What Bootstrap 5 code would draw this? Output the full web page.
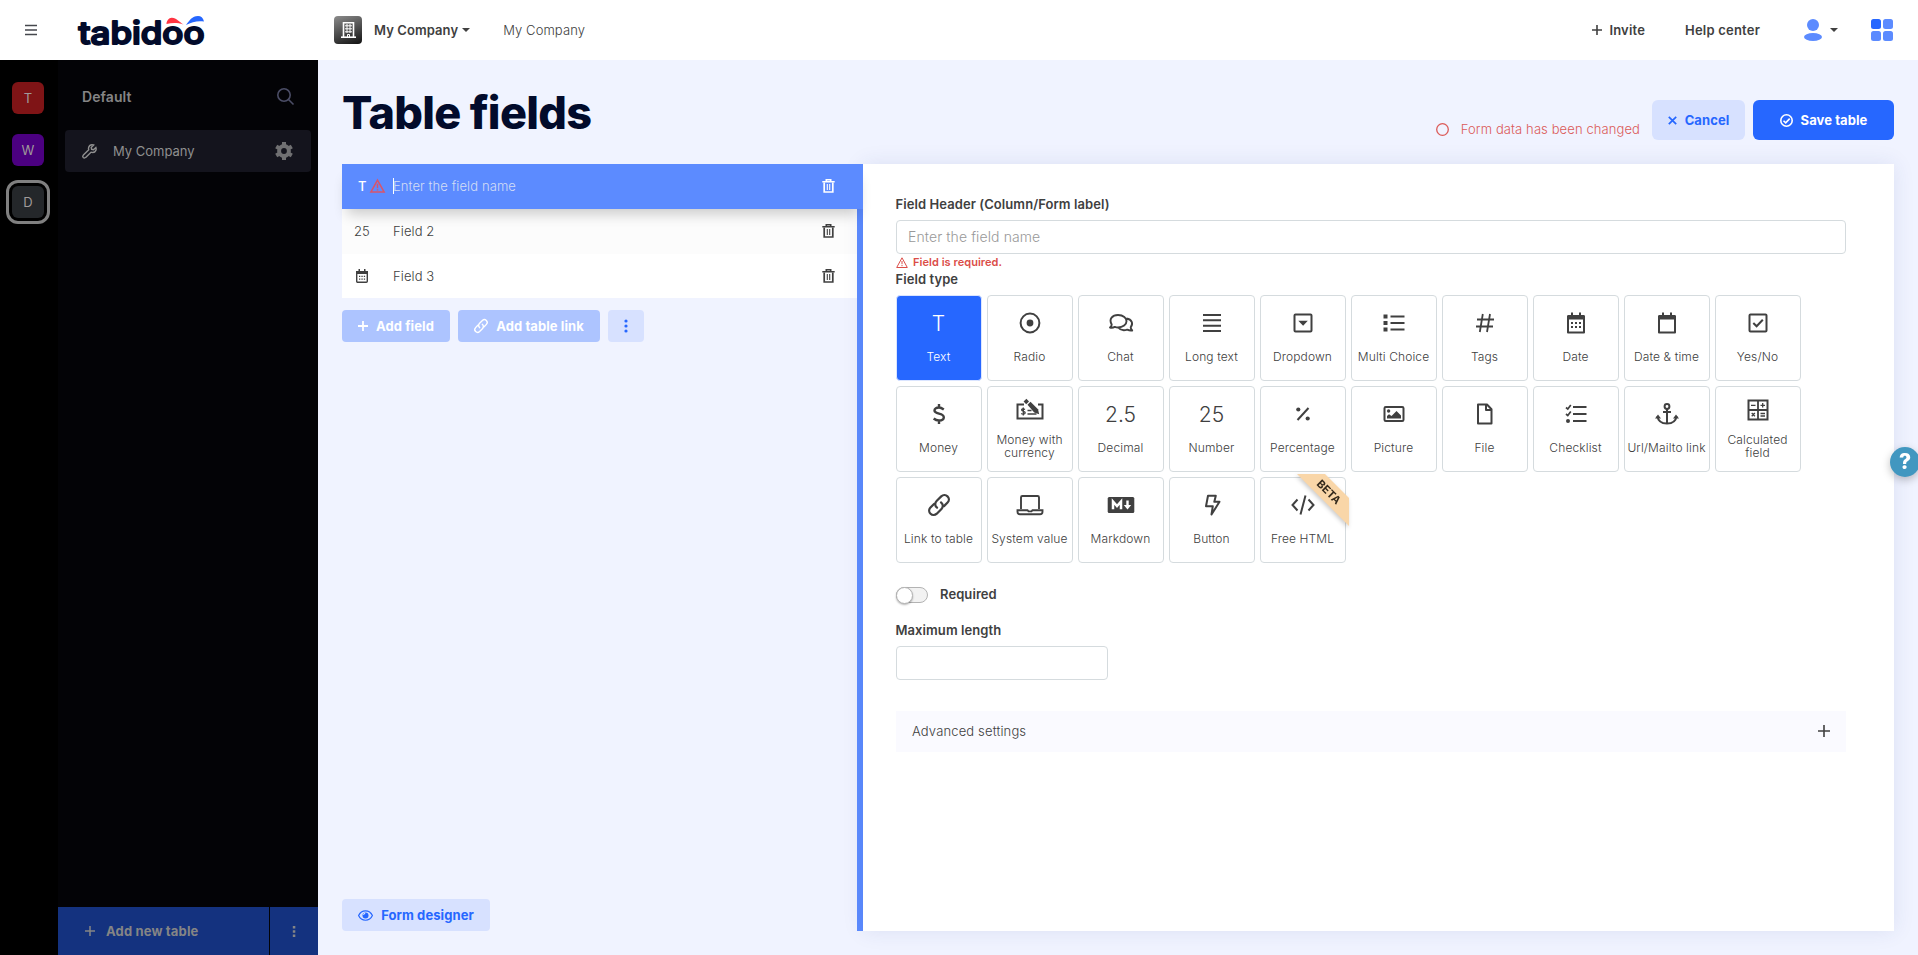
<!DOCTYPE html>
<html lang="en">
<head>
    <meta charset="UTF-8">
    <meta name="viewport" content="width=device-width, initial-scale=1.0">
    <title>Tabidoo - Table fields</title>
    <link href="https://cdn.jsdelivr.net/npm/bootstrap@5.3.0/dist/css/bootstrap.min.css" rel="stylesheet">
    <style>
        body { font-family: Inter, "Liberation Sans", sans-serif; font-size: 13px; font-weight: 350; line-height: 18px; color: #404040; background: #f0f3ff; overflow: hidden; }
        svg { display: block; flex-shrink: 0; overflow: visible; }
        .ic { fill: none; stroke: currentColor; stroke-width: 2; }
        .ic .f { fill: currentColor; stroke: none; }

        /* top bar */
        .topbar { height: 60px; background: #fff; }
        .topbar .burger { width: 77px; padding-left: 24.5px; color: #45474d; }
        .brand-box { width: 257px; }
        .brand-box text { font: 500 31px Inter, sans-serif; fill: #020b2b; stroke: #020b2b; stroke-width: 2; stroke-linejoin: round; }
        .app-icon { width: 28px; height: 28px; border-radius: 4px; background: linear-gradient(160deg, #8c8c8c, #111); }
        .caret-down { border: 4px solid transparent; border-top-color: #404040; border-bottom: 0; }

        /* dark side */
        .rail { width: 58px; background: #000; padding: 22px 0 0 12px; }
        .rail-tile { width: 32px; height: 32px; border-radius: 6px; margin-bottom: 20px; color: #a09a9a; font-size: 13px; font-weight: 400; }
        .rail-tile.active { outline: 3px solid #808080; outline-offset: 3px; }
        .side { width: 260px; background: #030306; color: #858585; }
        .side-head { height: 74px; padding: 0 24px; }
        .side-item { height: 42px; margin: -4px 7px 0; padding: 0 18px 0 17px; border-radius: 4px; background: #14141d; color: #8f8f8f; font-weight: 400; }
        .side-foot { height: 48px; gap: 1px; }
        .side-foot > div { background: #14327f; }

        /* content */
        .page { padding: 0 24px 24px; }
        .page-head { height: 104px; }
        h1 { font-size: 45px; font-weight: 800; line-height: 56px; letter-spacing: -.72px; color: #020b2b; margin: 25px 0 0; }
        .btn { --bs-btn-font-size: 13px; --bs-btn-font-weight: 700; --bs-btn-line-height: 18px; --bs-btn-border-width: 0; --bs-btn-padding-y: 0; --bs-btn-padding-x: 0; border-radius: 4px; height: 32px; white-space: nowrap; letter-spacing: .08px; }
        .btn-big { height: 40px; border-radius: 6px; }
        .btn-blue { background: #2667ff; color: #fff; }
        .btn-soft { background: #d7e1ff; color: #2667ff; }
        .btn-pale { background: #adc4ff; color: #fff; }
        .fields-col { width: 521px; border-right: 6px solid #5c8bff; }
        .field-row { height: 45px; background: #fff; padding: 0 22px 1px 0; letter-spacing: .1px; }
        .field-row.current { background: #5c8bff; color: #fff; box-shadow: 0 10px 14px -5px rgba(0,0,0,.2); position: relative; margin-right: -6px; padding-right: 28px; }
        .field-type { width: 51px; padding-left: 12px; }
        .caret-line { width: 1px; height: 16px; background: #fff; }
        .form-col { background: #fff; padding: 31px 48px 0 33px; box-shadow: 0 0 20px rgba(40,60,140,.1); }
        .lbl { font-weight: 600; letter-spacing: .08px; }
        .form-col > .lbl { text-indent: -.5px; }
        .form-control { height: 34px; font-size: 14px; font-weight: 350; border-color: #d5dbde; border-radius: 4px; padding: 0 11px 1px; letter-spacing: .1px; }
        .form-control::placeholder { color: #999; }
        .err { color: #db4d48; font-size: 11px; font-weight: 600; line-height: 15px; letter-spacing: .05px; }
        .tiles { gap: 5px; }
        .tile { width: 86px; height: 86px; border: 1px solid #d5dbde; border-radius: 4px; padding: 15px 1px 0 0; font-size: 12px; line-height: 13px; text-align: center; letter-spacing: .12px; white-space: nowrap; position: relative; }
        .tile .glyph { height: 24px; margin-bottom: 15px; display: flex; align-items: center; justify-content: center; font-size: 21px; letter-spacing: 0; }
        .tile.two { padding-top: 11px; white-space: normal; }
        .tile.two .glyph { margin-bottom: 11px; }
        .tile.on { background: #2667ff; color: #fff; border-color: #dbe5ff; }
        .ribbon { position: absolute; right: -4px; top: -4px; width: 52px; height: 52px; filter: drop-shadow(-1px 2px 2px rgba(0,0,0,.2)); }
        .ribbon text { font: 700 11px Inter, sans-serif; fill: #33291c; }
        .toggle { width: 32px; height: 16px; border: 1px solid #b3b3b3; border-radius: 8px; background: #f2f2f2; }
        .toggle i { display: block; width: 17px; height: 17px; margin: -1px; border-radius: 50%; background: #fff; border: 1px solid #b3b3b3; box-shadow: 0 1px 2px rgba(0,0,0,.3); }
        .advanced { height: 41px; background: #fafaff; padding: 0 16px 1px; }
        .help-dot { position: fixed; left: 1890px; top: 447px; width: 30px; height: 30px; border-radius: 50%; background: #4197c0; color: #fff; font-size: 21px; font-weight: 800; box-shadow: 0 3px 8px rgba(0,0,0,.25); }
    </style>
</head>
<body>
<div class="d-flex flex-column vh-100">
    <header class="topbar d-flex align-items-center flex-shrink-0">
        <div class="burger"><svg class="ic" width="12" height="12" style="stroke-width:1.4"><path d="M0 1.5h12M0 6h12M0 10.5h12"/></svg></div>
        <div class="brand-box">
            <svg width="128" height="32" viewBox="0 0 128 32">
                <text x="1.5" y="29.5" textLength="126" lengthAdjust="spacingAndGlyphs">tabidoo</text>
                <path d="M89.500 10c0-3 2.500-6.500 5.500-6.200 4.500.4 7 4 11.500 6.700-6-1.800-11-1.800-17-.5z" fill="#ff3341"/>
                <path d="M109 11c3.500-4.500 6-9 12-9 3 0 5 1.800 6 5.500-6-1-12 .2-18 3.500z" fill="#2667ff"/>
            </svg>
        </div>
        <div class="app-icon d-flex align-items-center justify-content-center">
            <svg width="15" height="16" fill="none" stroke="#fff"><path d="M2.500 15.500V.8h10v14.700" stroke-width="1.600"/><path d="M0 15.200h15" stroke-width="1.600"/><path d="M4 3.800h7M4 6.800h7M4 9.800h7M6 2v9M9 2v9M6.500 15v-2.500h2V15" stroke-width="1"/></svg>
        </div>
        <span class="lbl" style="margin-left:12px">My Company</span>
        <span class="caret-down" style="margin-left:4px"></span>
        <span style="margin-left:33px;letter-spacing:.1px">My Company</span>
        <div class="ms-auto d-flex align-items-center lbl">
            <svg class="ic" width="10" height="10" style="stroke-width:1.6;margin-right:7px"><path d="M5 0v10M0 5h10"/></svg>
            <span style="letter-spacing:.2px">Invite</span>
            <span style="margin:0 44px 0 40px;letter-spacing:.2px">Help center</span>
            <svg width="18" height="22" fill="#5c8bff"><circle cx="9" cy="6" r="6"/><ellipse cx="9" cy="18" rx="9" ry="4"/></svg>
            <span class="caret-down" style="margin:0 33px 0 8px"></span>
            <svg width="22" height="22" fill="#5c8bff" style="margin-right:25px"><rect width="10" height="10" rx="2.5" fill="#2667ff"/><rect x="12" width="10" height="10" rx="2.5"/><rect y="12" width="10" height="10" rx="2.5"/><rect x="12" y="12" width="10" height="10" rx="2.5"/></svg>
        </div>
    </header>

    <div class="d-flex flex-grow-1">
        <nav class="rail flex-shrink-0">
            <div class="rail-tile d-flex align-items-center justify-content-center" style="background:#7f1416">T</div>
            <div class="rail-tile d-flex align-items-center justify-content-center" style="background:#4b0080">W</div>
            <div class="rail-tile active d-flex align-items-center justify-content-center" style="background:#24272a">D</div>
        </nav>
        <aside class="side d-flex flex-column flex-shrink-0">
            <div class="side-head d-flex align-items-center justify-content-between lbl">
                <span style="font-size:14px">Default</span>
                <svg class="ic" width="17" height="17" style="stroke-width:1.6;color:#4b4d66"><circle cx="7" cy="6" r="6.200"/><path d="M11.500 10.500l5 5"/></svg>
            </div>
            <div class="side-item d-flex align-items-center">
                <svg class="ic" width="15" height="15" viewBox="0 0 15 15" style="stroke-width:1.4"><path d="M13.900 3.400l-2.400 2.300-1.900-.4-.4-1.900L11.600 1C9.500.4 7.400 1.300 6.700 3.200c-.3.9-.3 1.700 0 2.500L1.400 11c-.8.8-.8 1.800-.2 2.500.7.7 1.800.7 2.500-.1L9 8.200c2 .7 4 .1 4.900-1.800.4-1 .4-2 0-3z"/></svg>
                <span style="margin-left:16px">My Company</span>
                <svg class="ms-auto" width="18" height="18" viewBox="-9 -9 18 18" fill="none" stroke="#707072"><circle r="4.900" stroke-width="4"/><g stroke-width="4"><path d="M0-9v3M0 9V6M7.800-4.500L5.200-3M-7.800 4.500L-5.200 3M-7.800-4.500L-5.200-3M7.800 4.500L5.200 3"/></g></svg>
            </div>
            <div class="side-foot d-flex mt-auto">
                <div class="d-flex align-items-center fw-bold" style="width:211px;padding-left:27px">
                    <svg class="ic" width="10" height="10" style="stroke-width:1.5"><path d="M5 0v10M0 5h10"/></svg><span style="margin-left:11px;letter-spacing:.15px">Add new table</span>
                </div>
                <div class="d-flex align-items-center justify-content-center flex-grow-1"><svg width="4" height="11" fill="#858585"><path d="M.8 0h2.500v2.500H.8zM.8 4.200h2.500v2.500H.8zM.8 8.400h2.500v2.500H.8z"/></svg></div>
            </div>
        </aside>

        <main class="page flex-grow-1 d-flex flex-column">
            <div class="page-head d-flex">
                <h1>Table fields</h1>
                <div class="ms-auto d-flex align-items-start" style="padding-top:40px">
                    <div class="d-flex align-items-center" style="color:#db5a58;margin:20px 12px 0 0;letter-spacing:.1px"><svg class="ic" width="13" height="13" style="stroke-width:1.3"><circle cx="6.500" cy="6.500" r="5.800"/></svg><span style="margin-left:12px">Form data has been changed</span></div>
                    <button class="btn btn-soft btn-big d-flex align-items-center justify-content-center" style="width:93px;margin-right:8px"><svg class="ic" width="9" height="9" style="stroke-width:1.7;margin-right:8px"><path d="M.8.8l7.400 7.400M8.200.8L.8 8.200"/></svg>Cancel</button>
                    <button class="btn btn-blue btn-big d-flex align-items-center justify-content-center" style="width:141px"><svg class="ic" width="13" height="13" style="stroke-width:1.6;margin-right:8px"><circle cx="6.500" cy="6.500" r="5.700"/><path d="M3.500 6.700l2.200 2.200 4-4.300"/></svg>Save table</button>
                </div>
            </div>

            <div class="d-flex flex-grow-1">
                <section class="fields-col d-flex flex-column flex-shrink-0">
                    <div class="field-row current d-flex align-items-center">
                        <div class="field-type d-flex align-items-center" style="padding-left:16px"><span style="width:12px;font-weight:500">T</span><svg width="15" height="14" viewBox="0 0 14 13" fill="none" stroke="#d9556b" stroke-width="1.4"><path d="M7 1l6.200 11.200H.8zM7 4.500v4M7 9.500v1.300"/></svg></div>
                        <span class="caret-line"></span><span style="color:#d3ddf5;margin-left:-1px">Enter the field name</span>
                        <svg class="trash ms-auto ic" width="13" height="14"></svg>
                    </div>
                    <div class="field-row d-flex align-items-center" style="background:#fcfcfc"><div class="field-type">25</div><span>Field 2</span><svg class="trash ms-auto ic" width="13" height="14"></svg></div>
                    <div class="field-row d-flex align-items-center" style="height:44px;padding-bottom:0"><div class="field-type"><svg class="ic" style="margin-left:2px" width="12" height="14"><rect x=".7" y="2.700" width="10.600" height="10.600" rx="1" stroke-width="1.400"/><path class="f" d="M0 2h12v3H0zM2.500 0H4v2.500H2.500zM8 0h1.500v2.500H8zM3 6.800h1.300v1.300H3zM5.400 6.800h1.300v1.300H5.400zM7.800 6.800h1.300v1.300H7.800zM3 9.500h1.300v1.300H3zM5.400 9.500h1.300v1.300H5.400zM7.800 9.500h1.300v1.300H7.800z"/></svg></div><span>Field 3</span><svg class="trash ms-auto ic" width="13" height="14"></svg></div>
                    <div class="d-flex gap-2" style="margin-top:12px">
                        <button class="btn btn-pale d-flex align-items-center justify-content-center" style="width:108px"><svg class="ic me-2" width="10" height="10" style="stroke-width:1.8"><path d="M5 0v10M0 5h10"/></svg>Add field</button>
                        <button class="btn btn-pale d-flex align-items-center justify-content-center" style="width:142px"><svg class="ic me-2" width="14" height="14" viewBox="2 2 20 20"><use href="#chain" width="24" height="24"/></svg>Add table link</button>
                        <button class="btn btn-soft d-flex align-items-center justify-content-center" style="width:36px"><svg width="4" height="14" fill="#2667ff"><circle cx="2" cy="2" r="1.600"/><circle cx="2" cy="7" r="1.600"/><circle cx="2" cy="12" r="1.600"/></svg></button>
                    </div>
                    <button class="btn btn-soft mt-auto d-flex align-items-center justify-content-center" style="width:148px"><svg class="ic me-2" width="15" height="11" style="stroke-width:1.2"><path d="M.6 5.500C3.500-.8 11.500-.8 14.400 5.500 11.500 11.800 3.500 11.800.6 5.500z"/><circle class="f" cx="7.500" cy="5.500" r="3"/><path d="M5.300 4.700L7 3" stroke="#d7e1ff"/></svg>Form designer</button>
                </section>

                <section class="form-col flex-grow-1">
                    <div class="lbl" style="margin-bottom:7px">Field Header (Column/Form label)</div>
                    <input class="form-control" placeholder="Enter the field name">
                    <div class="err d-flex align-items-center" style="margin-top:1px"><svg class="ic" width="12" height="11" viewBox="0 0 12 11" style="stroke-width:1"><path d="M6 .8l5.300 9.700H.7zM6 4v3.200M6 8v1.200"/></svg><span style="margin-left:5px">Field is required.</span></div>
                    <div class="lbl" style="margin-bottom:7px">Field type</div>
                    <div class="tiles d-flex flex-wrap" id="fieldTypes" style="width:920px"></div>
                    <div class="d-flex align-items-center" style="margin-top:23px"><span class="toggle"><i></i></span><span class="lbl" style="margin:-1px 0 0 12px">Required</span></div>
                    <div class="lbl" style="margin:18px 0 7px">Maximum length</div>
                    <input class="form-control" style="width:212px">
                    <div class="advanced d-flex align-items-center justify-content-between" style="margin-top:31px;letter-spacing:.15px">Advanced settings<svg class="ic" width="12" height="12" style="stroke-width:1.6"><path d="M6 0v12M0 6h12"/></svg></div>
                </section>
            </div>
        </main>
    </div>
</div>
<div class="help-dot d-flex align-items-center justify-content-center">?</div>

<svg width="0" height="0" style="position:absolute">
    <symbol id="chain" viewBox="0 0 24 24" overflow="visible"><path d="M10.200 14.400C8 12.600 8.200 10 10 8.200l4-4c3.800-3.600 9.300 1.700 5.700 5.500L16.500 13M13.800 9.600c2.200 1.800 2 4.400.2 6.200l-4 4c-3.800 3.600-9.300-1.700-5.700-5.500L7.500 11" stroke-linecap="round"/></symbol>
</svg>

<script src="https://cdn.jsdelivr.net/npm/bootstrap@5.3.0/dist/js/bootstrap.bundle.min.js"></script>
<script>
    const trash = '<path d="M2.200 3.500v9.500h8.600V3.500" stroke-width="1.700"/><path d="M.3 2.800h12.400M4.300 2.500V.8h4.400v1.700" stroke-width="1.600"/><path d="M5.300 5v6M7.700 5v6" stroke-width="1.100"/>';
    const calendar = '<path d="M4 6h16v15.500H4z" stroke-linejoin="round"/><path class="f" d="M3 5.500C3 4.500 3.500 4 4.500 4H7V1.500h2V4h6V1.500h2V4h2.500c1 0 1.500.5 1.500 1.500V8.500H3z"/>';

    // 24x24 icons; plain strings without a tag are shown as text
    const fieldTypes = [
        ['Text', 'T'],
        ['Radio', '<circle cx="12" cy="12" r="9.400"/><circle class="f" cx="12" cy="12" r="3.400"/>'],
        ['Chat', '<path d="M1 16.500c1.300-1 1.700-2 1.700-3C-.5 8 3.500 4 9 4s8.500 3 8.500 6.200-3.500 6.300-8.500 6.300c-1.200 0-2.200-.2-3.200-.6-1.500.8-3 1-4.800.6zM17.500 7.500c5.500.8 7 5 4.200 8.700 0 1.300.6 2.300 1.500 3.300-2 .3-3.500-.1-5-.8-3.700 1.200-7 .2-8.700-2" stroke-width="1.900" stroke-linejoin="round"/>'],
        ['Long text', '<path d="M3 4h18M3 9.300h18M3 14.700h18M3 20h18"/>'],
        ['Dropdown', '<rect x="3.500" y="3.500" width="17" height="17" rx="1"/><path class="f" d="M7.300 9.800h9.500l-4.700 5z"/>'],
        ['Multi Choice', '<path class="f" d="M1.500 3.500h4v4h-4zM1.500 10h4v4h-4zM1.500 16.500h4v4h-4z"/><path d="M8.500 5.500h14M8.500 12h14M8.500 18.500h14" stroke-width="1.800"/>'],
        ['Tags', '<path d="M9.800 3L6.800 21M17 3l-3 18M4 8.500h17M3 15.500h17" stroke-width="1.800"/>'],
        ['Date', calendar + '<path class="f" d="M7 11h2v2H7zM11 11h2v2h-2zM15 11h2v2h-2zM7 15h2v2H7zM11 15h2v2h-2zM15 15h2v2h-2z"/>'],
        ['Date & time', calendar],
        ['Yes/No', '<rect x="3.500" y="3.500" width="17" height="17" rx="1"/><path d="M7.300 12l3.300 3.300 6.200-6.500"/>'],
        ['Money', '<path d="M16.800 7.500C15 6.200 13.500 5.500 12 5.500c-3 0-4.500 1.300-4.500 3 0 4.200 9.300 2.200 9.300 6.800 0 2-2 3.200-4.800 3.200-2 0-3.700-.6-5.300-2M12 2v3.500M12 18.500V22" stroke-width="2.400"/>'],
        ['Money with currency', '<path d="M6 6.500H-.5v14h25v-14H20"/><path d="M7 11.500c-1.500-1-3.400-.6-3.400.6 0 1.600 3.600.9 3.600 2.700 0 1.500-2.500 1.700-4 .6M5.300 9.500v8" stroke-width="1.300"/><path d="M9.500 12.500h4M9.500 16h9" stroke-width="1.700"/><path d="M7 2.200l2.600 2.600" stroke-width="4"/><path class="f" d="M9.500 6.800l3-3 7.500 7.500 1.200 5-5-1.700z"/>', 'two'],
        ['Decimal', '2.5'],
        ['Number', '25'],
        ['Percentage', '<path d="M17.500 6L6.500 18" stroke-width="2"/><circle class="f" cx="7.300" cy="7.500" r="2.100"/><circle class="f" cx="16.700" cy="16.500" r="2.100"/>'],
        ['Picture', '<rect x="2.500" y="5" width="19" height="14" rx="1.300"/><circle class="f" cx="6.600" cy="9" r="1.700"/><path class="f" d="M5 16.500v-2.500l2-1.700 2.500 1.700 5-5 4.500 4.500v3z"/>'],
        ['File', '<path d="M5 2.500h9l4.500 4.700v14.300H5zM13 2.500V8h5.500" stroke-linejoin="round"/>'],
        ['Checklist', '<path d="M9 5h13.500M9 12h13.500M9 19h13.500"/><path d="M2 5.500l1.800 1.600 3-4M2 12l1.800 1.600 3-4" stroke-width="1.700"/><circle class="f" cx="4" cy="19" r="2"/>'],
        ['Url/Mailto link', '<circle cx="12" cy="4.500" r="2.400"/><path d="M12 7v14.500M8 10h8M2.500 14c.5 5 4.500 7.500 9.500 7.500s9-2.500 9.500-7.500"/><path class="f" d="M0 16.500l3-4 3 4zM18 16.500l3-4 3 4z"/>'],
        ['Calculated field', '<rect x="2.500" y="2.500" width="19" height="19"/><path d="M12 3v19M2.500 12h19" stroke-width="1.800"/><path d="M5 7.300h4.500M14.500 7.300H19M16.700 5v4.500M14.500 15.500h4.500M14.500 18h4.500M5.700 15l3.200 3.200M8.900 15l-3.200 3.200" stroke-width="1.300"/>', 'two'],
        ['Link to table', '<g transform="translate(-1.3 -1.3) scale(1.11)"><use href="#chain" width="24" height="24"/></g>'],
        ['System value', '<path d="M3 16V4.500C3 3.500 3.400 3 4.400 3h15.200c1 0 1.400.5 1.400 1.500V16M-.5 17.200h10l1 1.200h3l1-1.200h10v1.600c0 1.500-1 2.500-2.500 2.500H2c-1.500 0-2.500-1-2.500-2.500z" stroke-width="1.900"/>'],
        ['Markdown', '<rect class="f" x="-1.300" y="4" width="26.600" height="16" rx="1.500"/><path d="M4 16.200V8.500l4 4.500 4-4.500v7.700" stroke="#fff" stroke-width="2.500"/><path d="M18.500 7.500v5" stroke="#fff" stroke-width="2.400"/><path d="M14.800 12h7.400l-3.700 4.500z" fill="#fff" stroke="none"/>'],
        ['Button', '<path d="M8 2.800h7.800l-1.500 6h5.200L11.500 21.500l1.300-8.300H6z" stroke-linejoin="round"/>'],
        ['Free HTML', '<path d="M6.500 6.500L1.500 12l5 5.500M17.500 6.500l5 5.500-5 5.500M14.500 2.500l-5 19"/>', 'beta'],
    ];

    const list = document.getElementById('fieldTypes');
    fieldTypes.forEach(([name, icon, kind], i) => {
        const glyph = icon.startsWith('<') ? `<svg class="ic" width="24" height="24">${icon}</svg>` : icon;
        const ribbon = kind === 'beta'
            ? '<svg class="ribbon" viewBox="0 0 52 52"><path d="M0 0h28l24 24v28z" fill="#f9d6a8"/><text transform="translate(32 18) rotate(45)" text-anchor="middle" y="4">BETA</text></svg>' : '';
        list.innerHTML += `<div class="tile ${kind || ''} ${i === 0 ? 'on' : ''}"><div class="glyph">${glyph}</div>${name.replace('&', '&amp;')}${ribbon}</div>`;
    });

    document.querySelectorAll('.trash').forEach(el => el.innerHTML = trash);
</script>
</body>
</html>
